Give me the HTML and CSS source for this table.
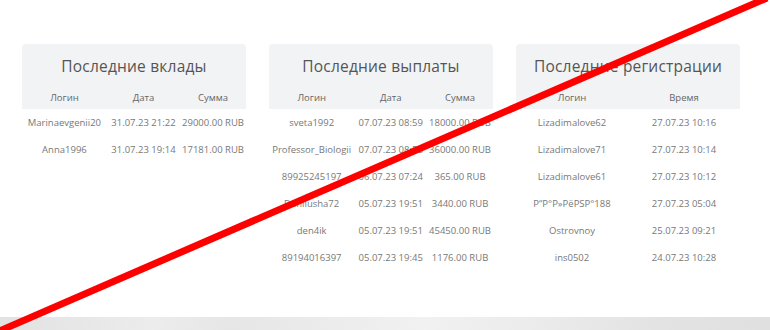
FILE: index.html
```html
<!DOCTYPE html>
<html lang="ru">
<head>
<meta charset="utf-8">
<link rel="stylesheet" href="styles.css">
</head>
<body>
<div class="page">
  <section class="stats">
    <div class="card">
      <div class="card-head">
        <h2 class="card-title">Последние вклады</h2>
      </div>
      <table class="tbl">
        <thead><tr><th>Логин</th><th>Дата</th><th>Сумма</th></tr></thead>
        <tbody>
          <tr><td>Marinaevgenii20</td><td>31.07.23 21:22</td><td>29000.00 RUB</td></tr>
          <tr><td>Anna1996</td><td>31.07.23 19:14</td><td>17181.00 RUB</td></tr>
        </tbody>
      </table>
    </div>
    <div class="card">
      <div class="card-head">
        <h2 class="card-title">Последние выплаты</h2>
      </div>
      <table class="tbl">
        <thead><tr><th>Логин</th><th>Дата</th><th>Сумма</th></tr></thead>
        <tbody>
          <tr><td>sveta1992</td><td>07.07.23 08:59</td><td>18000.00 RUB</td></tr>
          <tr><td>Professor_Biologii</td><td>07.07.23 08:58</td><td>36000.00 RUB</td></tr>
          <tr><td>89925245197</td><td>06.07.23 07:24</td><td>365.00 RUB</td></tr>
          <tr><td>Danilusha72</td><td>05.07.23 19:51</td><td>3440.00 RUB</td></tr>
          <tr><td>den4ik</td><td>05.07.23 19:51</td><td>45450.00 RUB</td></tr>
          <tr><td>89194016397</td><td>05.07.23 19:45</td><td>1176.00 RUB</td></tr>
        </tbody>
      </table>
    </div>
    <div class="card">
      <div class="card-head">
        <h2 class="card-title">Последние регистрации</h2>
      </div>
      <table class="tbl tbl-two">
        <thead><tr><th>Логин</th><th>Время</th></tr></thead>
        <tbody>
          <tr><td>Lizadimalove62</td><td>27.07.23 10:16</td></tr>
          <tr><td>Lizadimalove71</td><td>27.07.23 10:14</td></tr>
          <tr><td>Lizadimalove61</td><td>27.07.23 10:12</td></tr>
          <tr><td>Р“Р°Р»РёРЅР°188</td><td>27.07.23 05:04</td></tr>
          <tr><td>Ostrovnoy</td><td>25.07.23 09:21</td></tr>
          <tr><td>ins0502</td><td>24.07.23 10:28</td></tr>
        </tbody>
      </table>
    </div>
  </section>
  <div class="strip"></div>
  <svg class="cross" width="770" height="330" viewBox="0 0 770 330">
    <line x1="-3" y1="332" x2="767" y2="-2" stroke="#ff0000" stroke-width="7"/>
  </svg>
</div>
</body>
</html>
```
FILE: styles.css
```css
* { box-sizing: border-box; }
html, body { margin: 0; padding: 0; background: #fff; }
body { font-family: "Open Sans", "Noto Sans", sans-serif; color: #666; }
.page { position: relative; width: 770px; height: 330px; overflow: hidden; }
.stats {
  display: flex;
  gap: 23px;
  padding: 44px 0 0 22px;
  height: 317px;
}
.card { width: 224px; }
.card-head {
  background: #f2f3f5;
  border-radius: 4px 4px 0 0;
  height: 42px;
  display: flex;
  align-items: center;
  justify-content: center;
}
.card-title {
  margin: 1px 0 0;
  font-size: 15.5px;
  font-weight: 400;
  color: #555;
  letter-spacing: 0.2px;
  white-space: nowrap;
}
.tbl {
  width: 100%;
  border-collapse: collapse;
  font-size: 9.5px;
}
.tbl th {
  background: #f2f3f5;
  font-weight: 400;
  color: #666;
  height: 23px;
  padding: 0 0 1px;
  vertical-align: middle;
}
.tbl td {
  text-align: center;
  color: #787878;
  height: 27px;
  padding: 0 2px;
  white-space: nowrap;
}
.tbl th:nth-child(1), .tbl td:nth-child(1) { width: 86px; }
.tbl th:nth-child(2), .tbl td:nth-child(2) { width: 74px; }
.tbl-two th, .tbl-two td { width: 50% !important; }
.strip {
  height: 13px;
  background: linear-gradient(90deg, #e2e2e2 0%, #ececec 20%, #e6e6e6 30%, #f1f1f1 55%, #ebebeb 70%, #e3e3e3 85%, #e0e0e0 100%);
}
.cross { position: absolute; left: 0; top: 0; }
```
